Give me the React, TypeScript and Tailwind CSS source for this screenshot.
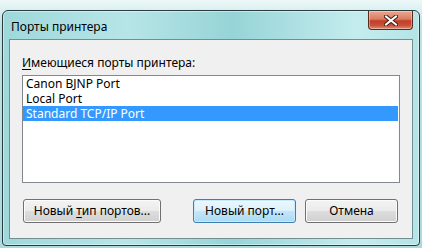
const font = { fontFamily: '"Noto Sans", "Liberation Sans", sans-serif' };

const ports = ["Canon BJNP Port", "Local Port", "Standard TCP/IP Port"];

function CloseButton() {
  return (
    <div className="mr-[6px] flex h-[19px] w-[45px] items-center justify-center rounded-b-[4px] border border-t-0 border-[#5a2a20] bg-[linear-gradient(180deg,#eaa893_0%,#dc7c63_45%,#c23d25_55%,#c8523a_80%,#e08c74_100%)] shadow-[inset_0_0_0_1px_rgba(255,255,255,0.35)]">
      <svg width="14" height="11" viewBox="0 0 14 11">
        <path
          d="M2 1.5 L12 9.5 M12 1.5 L2 9.5"
          stroke="#3b1a14"
          strokeWidth="4"
          strokeLinecap="square"
        />
        <path
          d="M2 1.5 L12 9.5 M12 1.5 L2 9.5"
          stroke="#ffffff"
          strokeWidth="2"
          strokeLinecap="square"
        />
      </svg>
    </div>
  );
}

function Button({
  children,
  width,
  primary,
}: {
  children: React.ReactNode;
  width: string;
  primary?: boolean;
}) {
  return (
    <div
      className={`flex h-[24px] items-center justify-center rounded-[3px] border text-[12px] text-black ${width} ${
        primary
          ? "border-[#3c7fb1] bg-[linear-gradient(180deg,#edf7fd_0%,#ddf1fc_48%,#c2e6f9_52%,#abdaf3_100%)] shadow-[inset_0_0_0_1px_#c8eaff]"
          : "border-[#707070] bg-[linear-gradient(180deg,#f3f3f3_0%,#ebebeb_48%,#dddddd_52%,#d0d0d0_100%)] shadow-[inset_0_0_0_1px_#fcfcfc]"
      }`}
    >
      <span>{children}</span>
    </div>
  );
}

export default function App() {
  return (
    <div
      className="h-[248px] w-[422px] overflow-hidden bg-[linear-gradient(180deg,#eef8f8_0%,#bfe4e6_10%,#a9dadd_100%)]"
      style={font}
    >
      <div className="ml-[2px] mt-[10px] flex h-[236px] w-[418px] flex-col rounded-t-[6px] rounded-b-[4px] border border-[#2c3a3c] bg-[linear-gradient(90deg,#9ed8db_0%,#b7e5e7_30%,#96d4d7_55%,#c4ecee_85%,#b4e4e6_100%)] shadow-[inset_0_0_0_1px_rgba(255,255,255,0.45)]">
        <div className="flex h-[28px] shrink-0 items-start justify-between">
          <div className="pl-[8px] pt-[8px] text-[12px] leading-[15px] text-black">
            Порты принтера
          </div>
          <CloseButton />
        </div>
        <div className="mx-[6px] h-[200px] border border-[#6f8f92] bg-[#f0f0f0] px-[12px] pt-[15px]">
          <div className="h-[15px] text-[12px] leading-[15px] text-black">
            <span className="underline underline-offset-2">И</span>меющиеся порты
            принтера:
          </div>
          <div className="mt-[5px] h-[108px] border border-[#828790] bg-white pr-[1px]">
            {ports.map((p, i) => (
              <div
                key={p}
                className={`h-[15px] pl-[3px] text-[12px] leading-[15px] ${
                  i === 2 ? "bg-[#3399ff] text-white" : "text-black"
                }`}
              >
                {p}
              </div>
            ))}
          </div>
          <div className="ml-[1px] mr-[2px] mt-[16px] flex items-center">
            <Button width="w-[138px]">
              Новый <span className="underline underline-offset-2">т</span>ип
              портов...
            </Button>
            <div className="ml-auto flex gap-[9px]">
              <Button width="w-[103px]" primary>
                Новый порт...
              </Button>
              <Button width="w-[93px]">Отмена</Button>
            </div>
          </div>
        </div>
      </div>
    </div>
  );
}
